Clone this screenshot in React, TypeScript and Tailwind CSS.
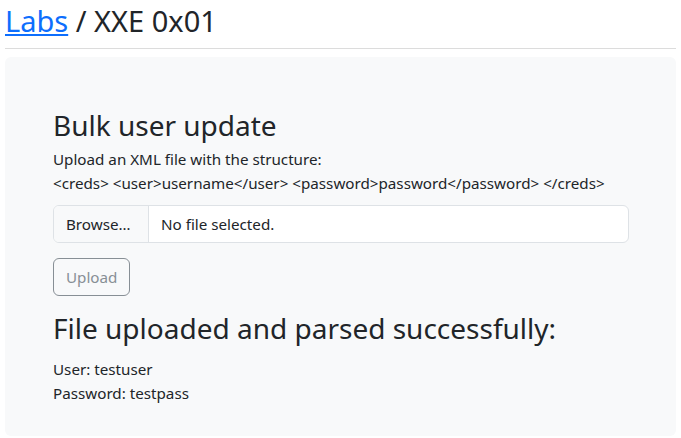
export default function App() {
  return (
    <div className="min-h-screen bg-white px-[5px] text-[#212529]" style={{ fontFamily: '"Noto Sans", "Open Sans", sans-serif' }}>
      <h1 className="pt-[4px] text-[29px] leading-[1.2]">
        <a href="#" className="text-[#0d6efd] underline">Labs</a> / XXE 0x01
      </h1>
      <hr className="mt-[9px] mb-2 border-t border-[#dcdcdc]" />
      <div className="h-[379px] rounded-md bg-[#f8f9fa] px-12 pt-[52px]">
        <h2 className="text-[28px] leading-[1.2]">Bulk user update</h2>
        <p className="mt-[5px] text-[15.2px] leading-6">
          Upload an XML file with the structure:
          <br />
          {'<creds> <user>username</user> <password>password</password> </creds>'}
        </p>
        <div className="mt-[10px] flex h-[38px] w-[576px] overflow-hidden rounded-md border border-[#dee2e6] bg-white text-[15.2px]">
          <div className="flex w-[95px] shrink-0 items-center border-r border-[#dee2e6] bg-[#f8f9fa] px-3">Browse…</div>
          <div className="flex items-center px-3">No file selected.</div>
        </div>
        <button className="mt-[15px] h-[38px] rounded-md border border-[#6c757d] px-3 text-[15.2px] text-[#6c757d] opacity-80">
          Upload
        </button>
        <h2 className="mt-[16px] text-[28px] leading-[1.2]">File uploaded and parsed successfully:</h2>
        <p className="mt-[11px] text-[15.2px] leading-6">User: testuser</p>
        <p className="text-[15.2px] leading-6">Password: testpass</p>
      </div>
    </div>
  );
}
